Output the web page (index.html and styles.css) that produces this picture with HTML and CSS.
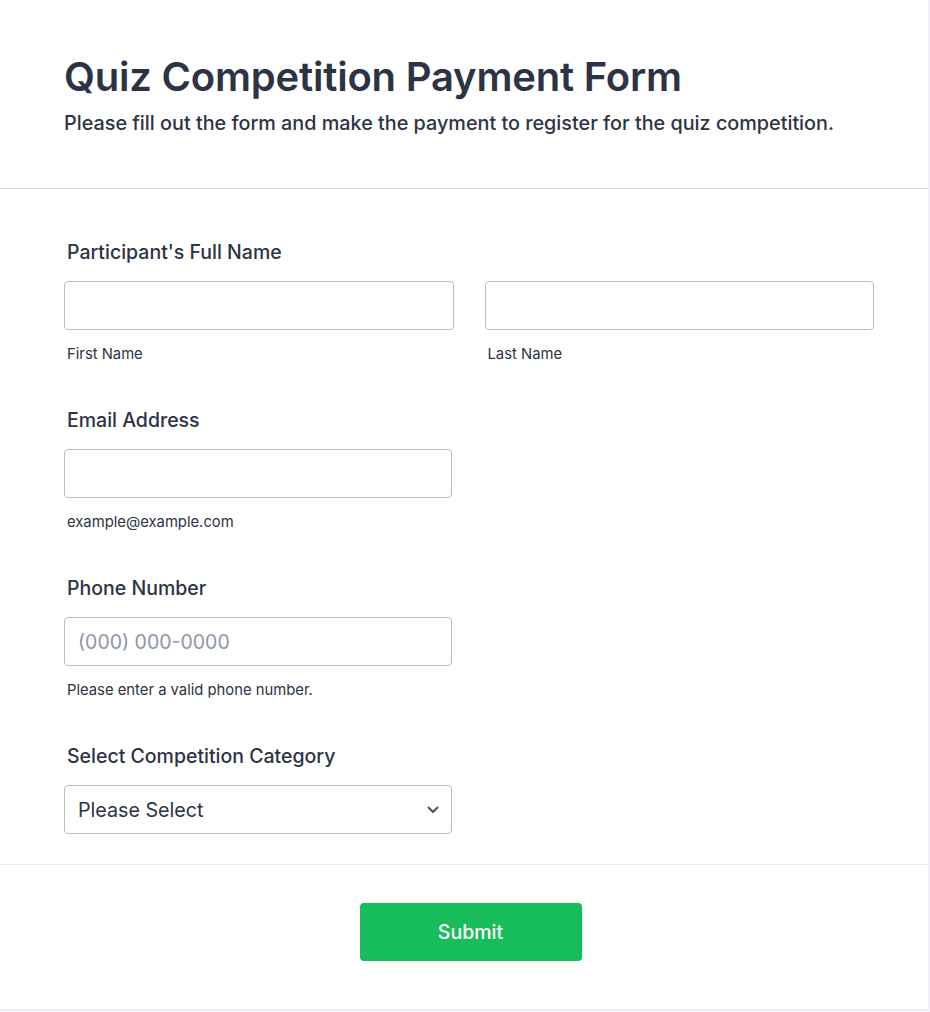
FILE: index.html
```html
<!DOCTYPE html>
<html lang="en">
<head>
  <meta charset="UTF-8" />
  <meta name="viewport" content="width=device-width, initial-scale=1.0"/>
  <title>Quiz Competition Payment Form</title>
  <link rel="stylesheet" href="styles.css">
</head>
<body>
  <form class="card" onsubmit="return false">
    <div class="header">
      <h1>Quiz Competition Payment Form</h1>
      <p>Please fill out the form and make the payment to register for the quiz competition.</p>
    </div>

    <div class="fields">
      <div class="field">
        <label class="label">Participant's Full Name</label>
        <div class="row">
          <div class="col">
            <input type="text" id="first" />
            <span class="sub">First Name</span>
          </div>
          <div class="col">
            <input type="text" id="last" />
            <span class="sub">Last Name</span>
          </div>
        </div>
      </div>

      <div class="field half">
        <label class="label" for="email">Email Address</label>
        <input type="email" id="email" />
        <span class="sub">example@example.com</span>
      </div>

      <div class="field half">
        <label class="label" for="phone">Phone Number</label>
        <input type="tel" id="phone" placeholder="(000) 000-0000" />
        <span class="sub">Please enter a valid phone number.</span>
      </div>

      <div class="field half">
        <label class="label" for="category">Select Competition Category</label>
        <div class="select-wrap">
          <select id="category">
            <option>Please Select</option>
            <option>General Knowledge</option>
            <option>Science</option>
            <option>History</option>
          </select>
          <svg class="chevron" width="12" height="8" viewBox="0 0 12 8"><path d="M1.5 1.5 6 6l4.5-4.5" fill="none" stroke="#4a5064" stroke-width="2" stroke-linecap="round" stroke-linejoin="round"/></svg>
        </div>
      </div>
    </div>

    <div class="footer">
      <button type="submit">Submit</button>
    </div>
  </form>
</body>
</html>
```

FILE: styles.css
```css
* {
  box-sizing: border-box;
}
body {
  margin: 0;
  font-family: Inter, 'Noto Sans', sans-serif;
  background: #f3f3fe;
  color: #2c3345;
}

.card {
  width: 929px;
  background: #fff;
  border-right: 1px solid #ececf3;
  border-bottom: 1px solid #ececf3;
  padding-bottom: 48px;
}

.header {
  padding: 53px 64px 0;
  height: 189px;
  border-bottom: 1px solid #d9dbe6;
}
.header h1 {
  margin: 0;
  font-size: 40px;
  line-height: 48px;
  font-weight: 600;
  letter-spacing: -0.2px;
}
.header p {
  margin: 9px 0 0;
  font-size: 19.8px;
  line-height: 26px;
  font-weight: 500;
}

.fields {
  padding: 51px 54px 0 64px;
}
.field {
  margin-bottom: 45px;
}
.field.half {
  width: 388px;
}
.label {
  display: block;
  padding-left: 3px;
  font-size: 19.5px;
  line-height: 24px;
  font-weight: 500;
  margin-bottom: 17px;
}
.row {
  display: flex;
  gap: 31px;
}
.col {
  flex: 1;
}

input, select {
  display: block;
  width: 100%;
  height: 49px;
  border: 1px solid #b8bdc9;
  border-radius: 4px;
  padding: 0 13px;
  font-family: inherit;
  font-size: 19.5px;
  color: #2c3345;
  background: #fff;
}
input::placeholder {
  color: #8d95a8;
}
input:focus, select:focus {
  outline: none;
  border-color: #2e69ff;
}

.sub {
  display: block;
  padding-left: 3px;
  margin-top: 15px;
  font-size: 14.8px;
  line-height: 18px;
}

.select-wrap {
  position: relative;
}
select {
  appearance: none;
  -webkit-appearance: none;
  font-size: 19.7px;
  cursor: pointer;
}
.chevron {
  position: absolute;
  right: 13px;
  top: 21px;
  pointer-events: none;
}

.footer {
  margin-top: -15px;
  border-top: 1px solid #eaebf1;
  padding-top: 38px;
  display: flex;
  justify-content: center;
}
button {
  margin-left: 13px;
  width: 222px;
  height: 58px;
  border: none;
  border-radius: 4px;
  background: #18bd5b;
  color: #fff;
  font-family: inherit;
  font-size: 19.5px;
  font-weight: 500;
  cursor: pointer;
}
button:hover {
  background: #16aa52;
}
```
